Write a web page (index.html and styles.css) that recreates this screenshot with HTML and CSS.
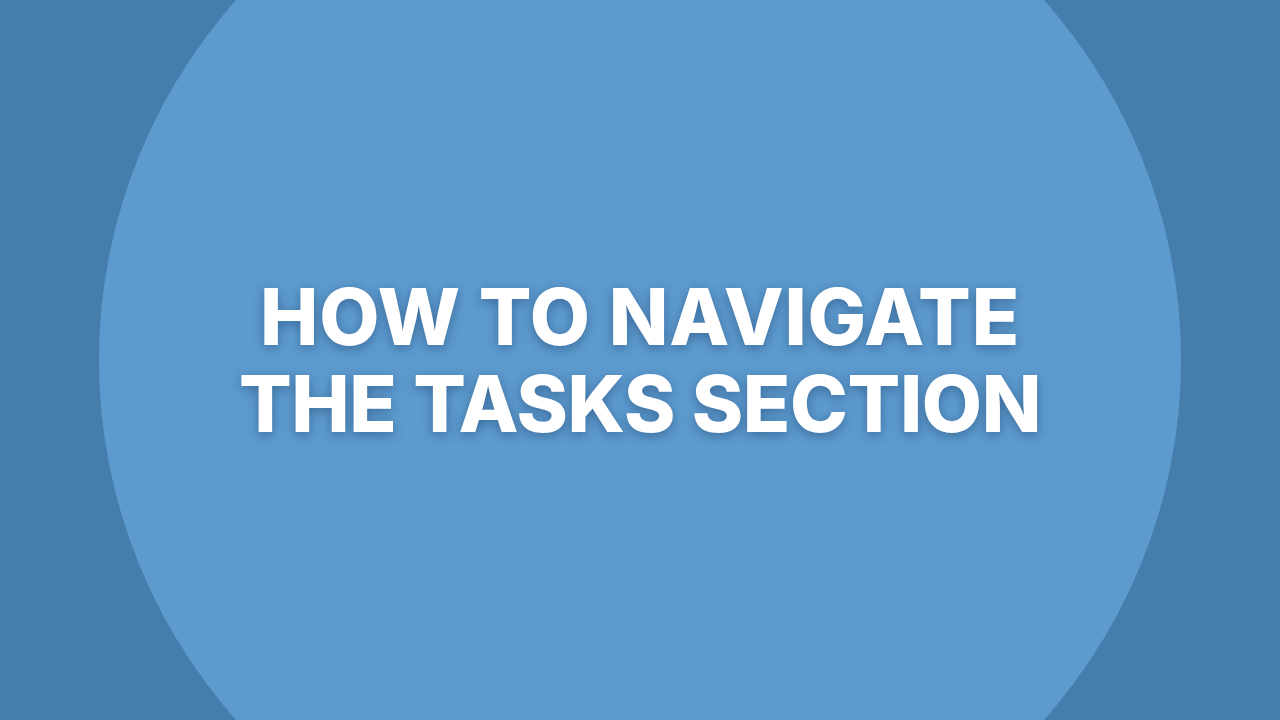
FILE: index.html
```html
<!DOCTYPE html>
<html lang="en">

<head>
  <meta charset="UTF-8">
  <meta name="viewport" content="width=device-width, initial-scale=1.0">
  <link rel="stylesheet" href="styles.css">
</head>

<body>
  <div class="backdrop">
    <h1 class="title">
      <span class="title-line">How to navigate</span>
      <span class="title-line title-line--tight">the tasks section</span>
    </h1>
  </div>
</body>

</html>
```

FILE: styles.css
```css
html {
  overflow: hidden;
}

body {
  background-color: #457ead;
  display: flex;
  align-items: center;
  justify-content: center;
  height: 100vh;
  margin: 0;
  overflow: hidden;
}

.backdrop {
  flex: none;
  width: 1082px;
  height: 1082px;
  border-radius: 50%;
  background-color: #5d9bcf;
  display: flex;
  align-items: center;
  justify-content: center;
}

.title {
  margin: 0;
  display: flex;
  flex-direction: column;
  align-items: center;
  color: #fff;
  font-family: "Inter", "Open Sans", sans-serif;
  font-weight: 800;
  font-size: 78px;
  line-height: 87px;
  text-transform: uppercase;
  text-shadow: 0 3px 12px rgba(20, 50, 90, 0.45);
}

.title-line {
  letter-spacing: 0.8px;
  white-space: nowrap;
}

.title-line--tight {
  letter-spacing: -0.4px;
}
```
